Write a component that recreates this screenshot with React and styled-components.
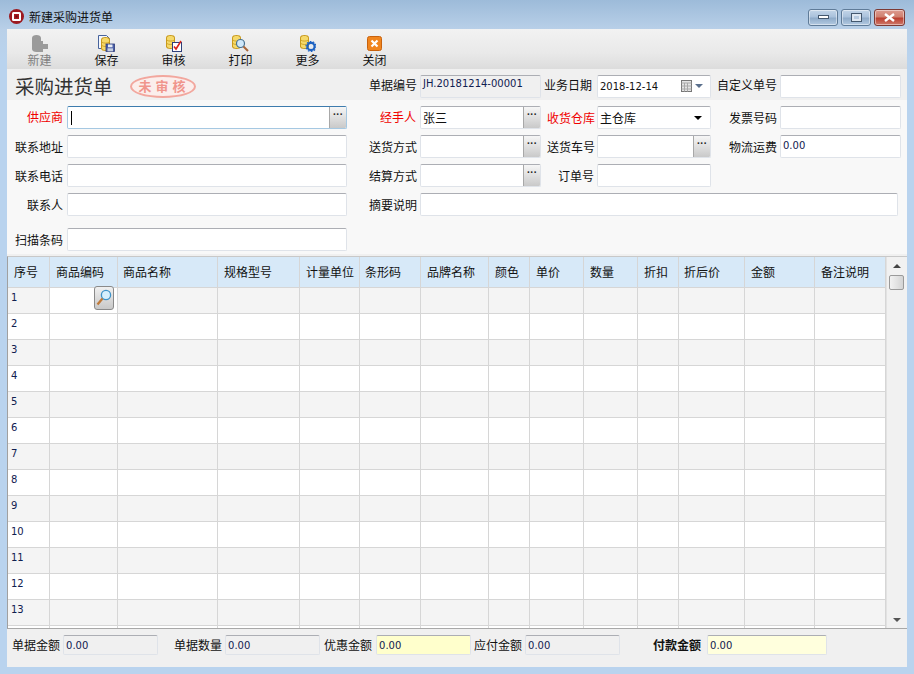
import React from "react";
import styled, { createGlobalStyle } from "styled-components";

const GlobalStyle = createGlobalStyle`
  html, body {
    margin: 0;
    padding: 0;
    background: #b9d3ee;
  }
  body {
    font-family: "Noto Sans CJK SC", "Liberation Sans", sans-serif;
    font-size: 12px;
    color: #111;
  }
`;

const formColumns = "60px 280px 73px 121px 56px 114px 69px 121px";
const gridColumns = "42px 68px 100px 82px 60px 61px 68px 41px 54px 54px 41px 66px 70px 71px";
const headers = [
  "序号", "商品编码", "商品名称", "规格型号", "计量单位", "条形码", "品牌名称",
  "颜色", "单价", "数量", "折扣", "折后价", "金额", "备注说明",
];
const headerPad = [6, 6, 5, 6, 6, 5, 6, 6, 6, 6, 6, 5, 6, 6];
const rows = [1, 2, 3, 4, 5, 6, 7, 8, 9, 10, 11, 12, 13, ""];

const Win = styled.div`
  width: 914px;
  height: 674px;
  box-sizing: border-box;
  display: flex;
  flex-direction: column;
  padding: 0 7px 7px;
  overflow: hidden;
  background: linear-gradient(#9dbbd9 0, #b9d0e8 30px, #b9d3ee 60px);
`;

const TitleBar = styled.div`
  height: 29px;
  flex: none;
  display: flex;
  align-items: center;
  margin-left: -7px;
  padding-left: 9px;
  gap: 5px;
  color: #111;
  padding-top: 4px;
  box-sizing: border-box;
`;

const TitleText = styled.span`
  font-size: 12px;
  line-height: 14px;
  flex: 1;
`;

const WinButtons = styled.div`
  display: flex;
  gap: 3px;
  margin-right: 2px;
  margin-top: 1px;
`;

const WinBtn = styled.div`
  width: ${(p) => (p.$close ? 31 : 30)}px;
  height: 17px;
  box-sizing: border-box;
  border: 1px solid ${(p) => (p.$close ? "#7d3a34" : "#5f7b98")};
  border-radius: 3px;
  box-shadow: inset 0 0 0 1px rgba(255, 255, 255, 0.45);
  background: ${(p) =>
    p.$close
      ? "linear-gradient(#dd9b90 0, #d0806f 45%, #bb3f30 55%, #cf7a6b 100%)"
      : "linear-gradient(#c3d5e8 0, #aac2dc 45%, #8fabc9 55%, #b3cae2 100%)"};
  display: flex;
  align-items: center;
  justify-content: center;
`;

const Client = styled.div`
  flex: 1;
  display: flex;
  flex-direction: column;
  background: #f0f0f0;
  min-height: 0;
`;

const Toolbar = styled.div`
  height: 40px;
  flex: none;
  display: flex;
  background: linear-gradient(#f2f2f2 0, #e9e9e9 60%, #dcdcdc 100%);
`;

const ToolButton = styled.div`
  width: 67px;
  height: 40px;
  display: flex;
  flex-direction: column;
  align-items: center;
  padding-top: 6px;
  box-sizing: border-box;
  color: ${(p) => (p.$disabled ? "#808080" : "#111")};
  line-height: 14px;
  &:first-child {
    margin-left: -1px;
  }
  svg {
    display: block;
    margin-bottom: 1px;
  }
`;

const CloseIconWrap = styled.span`
  display: block;
  padding: 1px 0 1px;
`;

const FormRow = styled.div`
  display: grid;
  grid-template-columns: ${formColumns};
  align-items: center;
  height: ${(p) => p.$h || 23}px;
  margin-top: ${(p) => p.$mt || 0}px;
`;

const TopBand = styled.div`
  background: #f0f0f0;
  height: 31px;
  display: flex;
  align-items: center;
`;

const LowerForm = styled.div`
  background: #f8f8f8;
  height: 154px;
  padding-top: 6px;
  box-sizing: border-box;
`;

const Heading = styled.div`
  grid-column: span 2;
  display: flex;
  align-items: center;
  padding-left: 8px;
  font-size: 19.5px;
  line-height: 26px;
  color: #333;
`;

const Stamp = styled.div`
  width: 66px;
  height: 23px;
  margin-left: 17px;
  box-sizing: border-box;
  border: 2px solid #f2a79e;
  border-radius: 50%;
  background: #fbeeec;
  color: #f0958c;
  font-size: 13px;
  font-weight: 700;
  letter-spacing: 4px;
  padding-left: 3px;
  line-height: 18px;
  text-align: center;
  white-space: nowrap;
`;

const Label = styled.div`
  text-align: right;
  padding-right: ${(p) => p.$pr ?? 3}px;
  margin-top: ${(p) => p.$up || 0}px;
  color: ${(p) => (p.$red ? "#f00000" : "#111")};
  line-height: 16px;
  white-space: nowrap;
`;

const Field = styled.div`
  height: 23px;
  box-sizing: border-box;
  position: relative;
  display: flex;
  align-items: center;
  padding-left: 2px;
  margin-right: ${(p) => p.$mr || 0}px;
  grid-column: ${(p) => (p.$span ? `span ${p.$span}` : "auto")};
  background: ${(p) => p.$bg || "#fff"};
  border: 1px solid #dfe3e9;
  border-top-color: #acaeb4;
  border-radius: 2px;
  ${(p) => p.$focus && "border-color: #a5c8e2; border-top-color: #3e7cae;"}
  overflow: hidden;
`;

const Mono = styled.span`
  font-family: "DejaVu Sans", sans-serif;
  font-size: 10px;
  color: ${(p) => p.$c || "#102050"};
  margin-top: ${(p) => p.$mt ?? -3}px;
`;

const Caret = styled.span`
  width: 1px;
  height: 14px;
  margin-left: 1px;
  background: #000;
`;

const DotsButton = styled.div`
  position: absolute;
  right: 0;
  top: 0;
  bottom: 0;
  width: 16px;
  background: linear-gradient(#f6f6f6, #c9c9c9);
  border-left: 1px solid #a8a8a8;
  color: #222;
  font-size: 10px;
  font-weight: 700;
  line-height: 15px;
  text-align: center;
  font-family: "Liberation Sans", sans-serif;
`;

const FieldIcons = styled.div`
  position: absolute;
  right: 7px;
  top: 4px;
  display: flex;
  align-items: center;
  gap: 3px;
`;

const DownArrow = styled.div`
  width: 0;
  height: 0;
  border-left: 4px solid transparent;
  border-right: 4px solid transparent;
  border-top: 4px solid ${(p) => p.$c || "#000"};
`;

const SelectArrow = styled.div`
  position: absolute;
  right: 8px;
  top: 9px;
`;

const GridWrap = styled.div`
  margin-top: 2px;
  height: 373px;
  flex: none;
  display: flex;
  border-top: 1px solid #c8c8c8;
  border-left: 1px solid #a0a0a0;
  border-bottom: 1px solid #a8a8a8;
  background: #fff;
  box-sizing: border-box;
`;

const GridBody = styled.div`
  width: 878px;
  overflow: hidden;
`;

const GridRow = styled.div`
  display: grid;
  grid-template-columns: ${gridColumns};
  height: ${(p) => (p.$head ? 31 : 26)}px;
  background: ${(p) => (p.$head ? "#d7e9f8" : p.$odd ? "#f4f4f4" : "#fff")};
`;

const Cell = styled.div`
  box-sizing: border-box;
  border-right: 1px solid #d6d6d6;
  border-bottom: 1px solid #d6d6d6;
  position: relative;
  padding-left: ${(p) => (p.$head ? p.$pl : 3)}px;
  padding-bottom: ${(p) => (p.$head ? 2 : 0)}px;
  display: flex;
  align-items: center;
  white-space: nowrap;
  background: ${(p) => (p.$white ? "#fff" : "transparent")};
`;

const RowNum = styled.span`
  font-family: "DejaVu Sans", sans-serif;
  font-size: 10px;
  color: #102050;
  margin-top: -6px;
`;

const SearchBtn = styled.div`
  position: absolute;
  right: 3px;
  top: -2px;
  width: 20px;
  height: 24px;
  box-sizing: border-box;
  border: 1px solid #8a8a8a;
  border-radius: 3px;
  background: linear-gradient(#f0f0f0, #c8c8c8);
  display: flex;
  align-items: center;
  justify-content: center;
`;

const Scrollbar = styled.div`
  width: 21px;
  flex: none;
  position: relative;
  background: #f1f1f1;
  border-left: 1px solid #e2e2e2;
  box-sizing: border-box;
`;

const ScrollUp = styled.div`
  position: absolute;
  top: 7px;
  left: 6px;
  width: 0;
  height: 0;
  border-left: 4px solid transparent;
  border-right: 4px solid transparent;
  border-bottom: 4px solid #444;
`;

const ScrollDown = styled.div`
  position: absolute;
  bottom: 6px;
  left: 6px;
  width: 0;
  height: 0;
  border-left: 4px solid transparent;
  border-right: 4px solid transparent;
  border-top: 4px solid #555;
`;

const ScrollThumb = styled.div`
  position: absolute;
  top: 18px;
  left: 2px;
  width: 15px;
  height: 15px;
  box-sizing: border-box;
  border: 1px solid #9a9a9a;
  border-radius: 2px;
  background: linear-gradient(90deg, #f2f2f2, #d4d4d4);
`;

const Footer = styled.div`
  flex: 1;
  display: flex;
  align-items: flex-start;
  padding: 6px 0 0 5px;
  background: #f0f0f0;
`;

const SumLabel = styled.div`
  margin-left: ${(p) => p.$ml || 0}px;
  margin-right: ${(p) => (p.$bold ? 6 : 3)}px;
  line-height: 20px;
  font-weight: ${(p) => (p.$bold ? 700 : 400)};
  white-space: nowrap;
`;

const SumField = styled.div`
  width: ${(p) => p.$w}px;
  height: 20px;
  margin-left: ${(p) => p.$ml || 0}px;
  box-sizing: border-box;
  padding-left: 2px;
  display: flex;
  align-items: center;
  background: ${(p) => p.$bg || "#f0f0f0"};
  border: 1px solid #dfe3e9;
  border-top-color: #acaeb4;
  border-radius: 2px;
`;

const Cylinder = ({ x = 0, y = 0, c1 = "#f5d96a", c2 = "#c99a1c" }) => (
  <g transform={`translate(${x} ${y})`}>
    <path d="M0 2.5C0 .8 2.2 0 4.5 0S9 .8 9 2.5v9C9 13.2 6.8 14 4.5 14S0 13.2 0 11.5z" fill={c2} />
    <path d="M1 3c0-1.4 1.6-2 3.5-2S8 1.6 8 3v8c0 1.4-1.6 2-3.5 2S1 12.4 1 11z" fill={c1} />
    <path d="M1 5.2c1.6 1.2 5.4 1.2 7 0M1 8.6c1.6 1.2 5.4 1.2 7 0" stroke={c2} fill="none" strokeWidth=".8" />
  </g>
);

const NewIcon = () => (
  <svg width="18" height="17" viewBox="0 0 18 17">
    <path d="M1 3c0-2 2-3 4.500-3S10 1 10 3v3h2v3h5v5h-5v3H5.500C3 17 1 16 1 14z" fill="#9b9b9b" />
  </svg>
);

const SaveIcon = () => (
  <svg width="17" height="17" viewBox="0 0 17 17">
    <path d="M.5.5h8l3 3v10H.5z" fill="#f4f7fc" stroke="#47639c" />
    <Cylinder x={3} y={2} />
    <rect x="8" y="9" width="8.500" height="7.500" fill="#4a5fa8" stroke="#2c3a78" strokeWidth=".8" />
    <rect x="10" y="9.500" width="4.500" height="2.800" fill="#e8ecf4" />
    <rect x="9.500" y="13.300" width="5.500" height="3" fill="#c6cfe0" />
  </svg>
);

const AuditIcon = () => (
  <svg width="16" height="17" viewBox="0 0 16 17">
    <Cylinder x={0} y={0} />
    <rect x="6.500" y="7.500" width="9" height="9" fill="#fff" stroke="#2e3f7a" />
    <path d="M8 11.500l2 2.500 5-8" stroke="#d8241c" strokeWidth="1.600" fill="none" />
  </svg>
);

const PrintIcon = () => (
  <svg width="17" height="17" viewBox="0 0 17 17">
    <Cylinder x={0} y={0} />
    <circle cx="8.500" cy="8.500" r="4" fill="#cfe8fb" stroke="#47708f" strokeWidth="1.200" />
    <path d="M11.500 11.500l4.500 4.500" stroke="#a8663a" strokeWidth="2" />
  </svg>
);

const MoreIcon = () => (
  <svg width="16" height="17" viewBox="0 0 16 17">
    <Cylinder x={0} y={0} />
    <circle cx="11" cy="11.500" r="3.600" fill="none" stroke="#1d62c2" strokeWidth="2.200" />
    <circle cx="11" cy="11.500" r="5" fill="none" stroke="#1d62c2" strokeWidth="1.200" strokeDasharray="1.600 1.500" />
    <circle cx="11" cy="11.500" r="1.200" fill="#dfeaf8" />
  </svg>
);

const CloseIcon = () => (
  <CloseIconWrap>
    <svg width="15" height="15" viewBox="0 0 15 15">
      <rect x=".5" y=".5" width="14" height="14" rx="2" fill="#f0851e" stroke="#c8620e" />
      <path d="M4.500 4.500l6 6m0-6l-6 6" stroke="#fff" strokeWidth="2.200" />
    </svg>
  </CloseIconWrap>
);

const AppLogo = () => (
  <svg width="15" height="15" viewBox="0 0 15 15">
    <circle cx="7.500" cy="7.500" r="7.500" fill="#9c1a20" />
    <rect x="3" y="3" width="9" height="9" rx="1.500" fill="#fff" />
    <rect x="5" y="5" width="5" height="5" fill="#a81c22" />
    <rect x="6.500" y="6.500" width="2" height="2" fill="#5e1418" />
  </svg>
);

const CalendarIcon = () => (
  <svg width="11" height="12" viewBox="0 0 11 12">
    <rect x=".5" y=".5" width="10" height="11" fill="#e4e4e4" stroke="#777" />
    <path d="M.5 3h10M3.500 3v8.500M6.500 3v8.500M.5 6h10M.5 9h10" stroke="#a8a8a8" fill="none" />
  </svg>
);

const SearchIcon = () => (
  <svg width="16" height="18" viewBox="0 0 16 18">
    <circle cx="10" cy="6" r="4.600" fill="#d6effc" stroke="#3f93c8" strokeWidth="1.300" />
    <path d="M6.500 9.500L1.500 15.500" stroke="#c07a3a" strokeWidth="2.200" />
  </svg>
);

const Dots = () => <DotsButton>···</DotsButton>;

const tools = [
  { label: "新建", icon: <NewIcon />, disabled: true },
  { label: "保存", icon: <SaveIcon /> },
  { label: "审核", icon: <AuditIcon /> },
  { label: "打印", icon: <PrintIcon /> },
  { label: "更多", icon: <MoreIcon /> },
  { label: "关闭", icon: <CloseIcon /> },
];

export default function App() {
  return (
    <>
      <GlobalStyle />
      <Win>
        <TitleBar>
          <AppLogo />
          <TitleText>新建采购进货单</TitleText>
          <WinButtons>
            <WinBtn>
              <svg width="11" height="5"><rect x=".5" y=".5" width="10" height="3" fill="#fff" stroke="#44586e" /></svg>
            </WinBtn>
            <WinBtn>
              <svg width="11" height="9"><rect x=".5" y=".5" width="10" height="8" fill="#dfe8f2" stroke="#44586e" /><rect x="3" y="3" width="5" height="3" fill="#b8cbe0" /></svg>
            </WinBtn>
            <WinBtn $close>
              <svg width="13" height="9"><path d="M2 1l9 7m0-7L2 8" stroke="#fff" strokeWidth="2.400" /></svg>
            </WinBtn>
          </WinButtons>
        </TitleBar>
        <Client>
          <Toolbar>
            {tools.map((t) => (
              <ToolButton key={t.label} $disabled={t.disabled}>
                {t.icon}
                {t.label}
              </ToolButton>
            ))}
          </Toolbar>

          <TopBand>
            <FormRow>
              <Heading>
                采购进货单
                <Stamp>未审核</Stamp>
              </Heading>
              <Label $up={-2}>单据编号</Label>
              <Field $bg="#f0f0f0"><Mono $mt={-5}>JH.20181214-00001</Mono></Field>
              <Label $pr={5} $up={-3}>业务日期</Label>
              <Field>
                <Mono $c="#111" $mt={0}>2018-12-14</Mono>
                <FieldIcons>
                  <CalendarIcon />
                  <DownArrow $c="#5a6f8c" />
                </FieldIcons>
              </Field>
              <Label $up={-2}>自定义单号</Label>
              <Field />
            </FormRow>
          </TopBand>

          <LowerForm>
            <FormRow>
              <Label $red $pr={4} $up={-2}>供应商</Label>
              <Field $focus><Caret /><Dots /></Field>
              <Label $red $pr={4} $up={-2}>经手人</Label>
              <Field>张三<Dots /></Field>
              <Label $red $pr={2}>收货仓库</Label>
              <Field>
                主仓库
                <SelectArrow><DownArrow /></SelectArrow>
              </Field>
              <Label>发票号码</Label>
              <Field />
            </FormRow>
            <FormRow $mt={6}>
              <Label $pr={4}>联系地址</Label>
              <Field />
              <Label>送货方式</Label>
              <Field><Dots /></Field>
              <Label $pr={2}>送货车号</Label>
              <Field><Dots /></Field>
              <Label>物流运费</Label>
              <Field><Mono>0.00</Mono></Field>
            </FormRow>
            <FormRow $mt={6}>
              <Label $pr={4}>联系电话</Label>
              <Field />
              <Label>结算方式</Label>
              <Field><Dots /></Field>
              <Label $pr={3}>订单号</Label>
              <Field />
            </FormRow>
            <FormRow $mt={6}>
              <Label $pr={4}>联系人</Label>
              <Field />
              <Label>摘要说明</Label>
              <Field $span={5} $mr={3} />
            </FormRow>
            <FormRow $mt={12}>
              <Label $pr={4}>扫描条码</Label>
              <Field />
            </FormRow>
          </LowerForm>

          <GridWrap>
            <GridBody>
              <GridRow $head>
                {headers.map((h, i) => (
                  <Cell key={h} $head $pl={headerPad[i]}>{h}</Cell>
                ))}
              </GridRow>
              {rows.map((n, r) => (
                <GridRow key={r} $odd={r % 2 === 0}>
                  {headers.map((h, i) => (
                    <Cell key={h} $white={r === 0 && i === 1}>
                      {i === 0 && <RowNum>{n}</RowNum>}
                      {r === 0 && i === 1 && (
                        <SearchBtn><SearchIcon /></SearchBtn>
                      )}
                    </Cell>
                  ))}
                </GridRow>
              ))}
            </GridBody>
            <Scrollbar>
              <ScrollUp />
              <ScrollThumb />
              <ScrollDown />
            </Scrollbar>
          </GridWrap>

          <Footer>
            <SumLabel>单据金额</SumLabel>
            <SumField $w={95}><Mono $mt={0}>0.00</Mono></SumField>
            <SumLabel $ml={16}>单据数量</SumLabel>
            <SumField $w={95}><Mono $mt={0}>0.00</Mono></SumField>
            <SumLabel $ml={4}>优惠金额</SumLabel>
            <SumField $w={95} $ml={1} $bg="#ffffcc"><Mono $mt={0}>0.00</Mono></SumField>
            <SumLabel $ml={3}>应付金额</SumLabel>
            <SumField $w={95}><Mono $mt={0}>0.00</Mono></SumField>
            <SumLabel $ml={33} $bold>付款金额</SumLabel>
            <SumField $w={120} $bg="#ffffdd"><Mono $mt={0}>0.00</Mono></SumField>
          </Footer>
        </Client>
      </Win>
    </>
  );
}
